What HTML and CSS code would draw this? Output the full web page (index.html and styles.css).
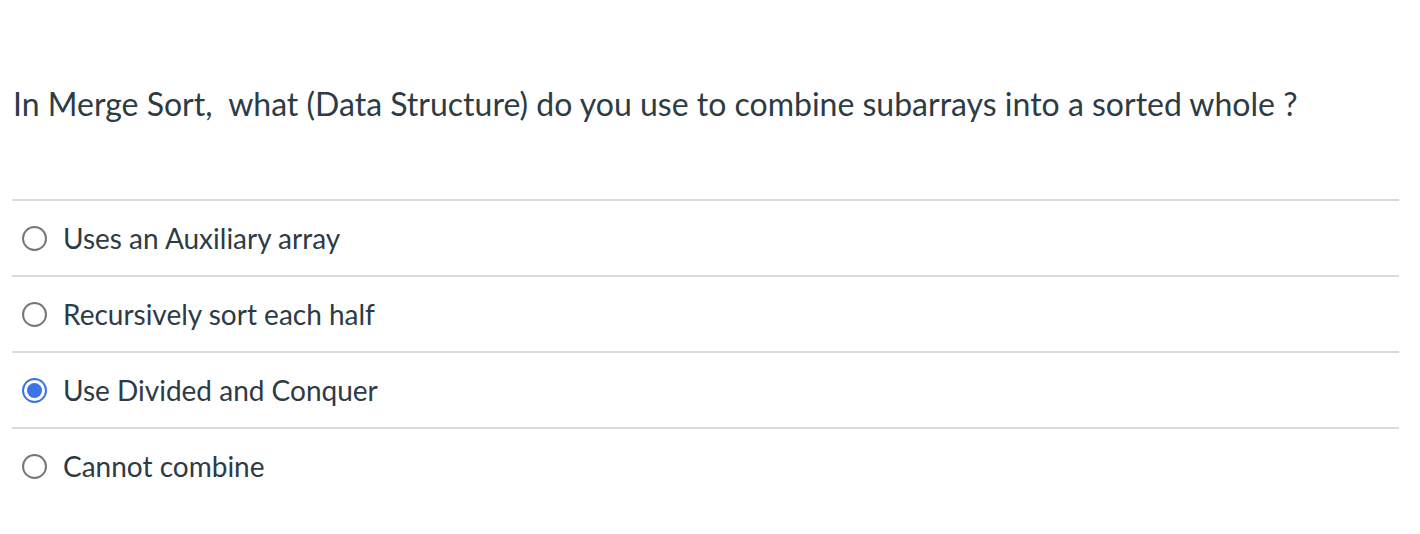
FILE: index.html
```html
<!DOCTYPE html>
<html>
<head>
<meta charset="utf-8">
<link rel="stylesheet" href="styles.css">
</head>
<body>
<div class="quiz">
  <p class="question">In Merge Sort,&nbsp; what (Data Structure) do you use to combine subarrays into a sorted whole ?</p>
  <div class="answers">
    <label class="answer"><span class="radio"></span><span class="text">Uses an Auxiliary array</span></label>
    <label class="answer"><span class="radio"></span><span class="text">Recursively sort each half</span></label>
    <label class="answer"><span class="radio checked"></span><span class="text">Use Divided and Conquer</span></label>
    <label class="answer"><span class="radio"></span><span class="text">Cannot combine</span></label>
  </div>
</div>
</body>
</html>
```
FILE: styles.css
```css
html, body {
  margin: 0;
  padding: 0;
  background: #ffffff;
}
body {
  font-family: Lato, "Open Sans", sans-serif;
  color: #2d3b45;
}
.quiz {
  padding: 0 21px 0 12px;
}
.question {
  margin: 0;
  padding: 80px 0 0 1px;
  height: 199px;
  box-sizing: border-box;
  font-size: 32px;
  line-height: 48px;
}
.answers {
  display: flex;
  flex-direction: column;
}
.answer {
  display: flex;
  align-items: center;
  height: 76px;
  box-sizing: border-box;
  border-top: 2px solid #dadada;
  padding-left: 10px;
}
.radio {
  width: 25px;
  height: 25px;
  box-sizing: border-box;
  border: 2px solid #767676;
  border-radius: 50%;
  flex: none;
  margin-right: 16px;
  position: relative;
}
.radio.checked {
  border: 2px solid #3b73e8;
}
.radio.checked::after {
  content: "";
  position: absolute;
  left: 3px;
  top: 3px;
  width: 15px;
  height: 15px;
  border-radius: 50%;
  background: #3b73e8;
}
.text {
  font-size: 28px;
  line-height: 36px;
}
```
